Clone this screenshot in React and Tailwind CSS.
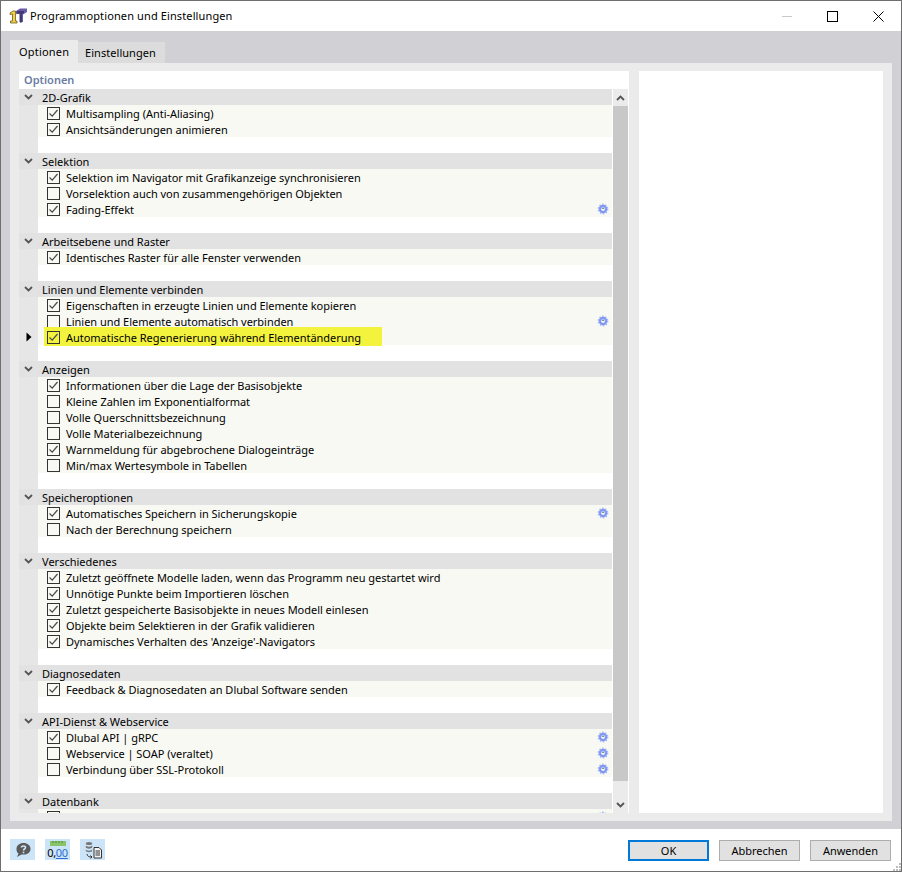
const SECTIONS = [
  { title: "2D-Grafik", rows: [
    { label: "Multisampling (Anti-Aliasing)", on: true },
    { label: "Ansichtsänderungen animieren", on: true },
  ] },
  { title: "Selektion", rows: [
    { label: "Selektion im Navigator mit Grafikanzeige synchronisieren", on: true },
    { label: "Vorselektion auch von zusammengehörigen Objekten" },
    { label: "Fading-Effekt", on: true, gear: true },
  ] },
  { title: "Arbeitsebene und Raster", rows: [
    { label: "Identisches Raster für alle Fenster verwenden", on: true },
  ] },
  { title: "Linien und Elemente verbinden", rows: [
    { label: "Eigenschaften in erzeugte Linien und Elemente kopieren", on: true },
    { label: "Linien und Elemente automatisch verbinden", gear: true },
    { label: "Automatische Regenerierung während Elementänderung", on: true, marked: true },
  ] },
  { title: "Anzeigen", rows: [
    { label: "Informationen über die Lage der Basisobjekte", on: true },
    { label: "Kleine Zahlen im Exponentialformat" },
    { label: "Volle Querschnittsbezeichnung" },
    { label: "Volle Materialbezeichnung" },
    { label: "Warnmeldung für abgebrochene Dialogeinträge", on: true },
    { label: "Min/max Wertesymbole in Tabellen" },
  ] },
  { title: "Speicheroptionen", rows: [
    { label: "Automatisches Speichern in Sicherungskopie", on: true, gear: true },
    { label: "Nach der Berechnung speichern" },
  ] },
  { title: "Verschiedenes", rows: [
    { label: "Zuletzt geöffnete Modelle laden, wenn das Programm neu gestartet wird", on: true },
    { label: "Unnötige Punkte beim Importieren löschen", on: true },
    { label: "Zuletzt gespeicherte Basisobjekte in neues Modell einlesen", on: true },
    { label: "Objekte beim Selektieren in der Grafik validieren", on: true },
    { label: "Dynamisches Verhalten des 'Anzeige'-Navigators", on: true },
  ] },
  { title: "Diagnosedaten", rows: [
    { label: "Feedback & Diagnosedaten an Dlubal Software senden", on: true },
  ] },
  { title: "API-Dienst & Webservice", rows: [
    { label: "Dlubal API | gRPC", on: true, gear: true },
    { label: "Webservice | SOAP (veraltet)", gear: true },
    { label: "Verbindung über SSL-Protokoll", gear: true },
  ] },
  { title: "Datenbank", rows: [{ label: "", gear: true }], last: true },
];

function Chevron({ up }) {
  return (
    <svg width="9" height="6" viewBox="0 0 9 6">
      <path d={up ? "M1 5 L4.5 1.5 L8 5" : "M1 1 L4.5 4.5 L8 1"} fill="none" stroke="#555" strokeWidth="1.8" />
    </svg>
  );
}

function Gear() {
  return (
    <svg width="12" height="12" viewBox="0 0 12 12" className="absolute right-[3px] top-[2px]">
      <circle cx="6" cy="6" r="4.3" fill="#7f96f3" />
      <circle cx="6" cy="6" r="4.6" fill="none" stroke="#9db0f7" strokeWidth="1.6" strokeDasharray="1.4 1.5" />
      <circle cx="6" cy="6" r="1.9" fill="#f4f5ff" />
      <circle cx="6" cy="5.2" r="0.7" fill="#333" />
    </svg>
  );
}

function Checkbox({ on }) {
  return (
    <span className="w-[13px] h-[13px] border border-[#333] flex items-center justify-center shrink-0">
      {on && (
        <svg width="11" height="11" viewBox="0 0 11 11">
          <path d="M1.5 5.5 L4.2 8.2 L9.5 2" fill="none" stroke="#4a4a4a" strokeWidth="1.2" />
        </svg>
      )}
    </span>
  );
}

function OptionRow({ row }) {
  return (
    <div className="flex h-4">
      <div className="w-[19px] bg-[#e6e6e6] flex items-center justify-center relative">
        {row.marked && (
          <svg width="6" height="10" viewBox="0 0 6 10" className="ml-[1px]">
            <path d="M0.5 0.5 L5.5 5 L0.5 9.5 Z" fill="#000" />
          </svg>
        )}
      </div>
      <div className="flex-1 relative bg-[#f8f9f3] flex items-center pl-[9px]">
        {row.marked && <div className="absolute left-[6px] top-[-2px] w-[338px] h-[19px] bg-[#f3f33e]" />}
        <div className="relative flex items-center gap-[6px]">
          <Checkbox on={row.on} />
          <span className="whitespace-nowrap pt-px tracking-[-0.025px]">{row.label}</span>
        </div>
        {row.gear && <Gear />}
      </div>
    </div>
  );
}

function Section({ section }) {
  return (
    <div>
      <div className="h-4 bg-[#e2e2e2] flex items-center">
        <div className="w-[19px] flex justify-center">
          <Chevron />
        </div>
        <span className="ml-[4px] pt-px">{section.title}</span>
      </div>
      {section.rows.map((row, i) => (
        <OptionRow key={i} row={row} />
      ))}
      {!section.last && (
        <div className="flex h-4">
          <div className="w-[19px] bg-[#e6e6e6]" />
        </div>
      )}
    </div>
  );
}

function Logo() {
  return (
    <svg width="18" height="16" viewBox="0 0 18 16">
      <path d="M7 3 L11 0.5 L18 0.5 L18 4 L14 6.5 L14 14 L11 15 L11 6 L7 6 Z" fill="#6a5aa8" />
      <path d="M8 3 L15 3 L15 5.5 L13 5.5 L13 14 L10.5 14 L10.5 5.5 L8 5.5 Z" fill="#3f3a70" />
      <path d="M1 5 L4 3 L6.5 3 L6.5 13 L8 13 L8 15 L1.5 15 L1.5 13 L3.5 13 L3.5 6 L1 6.5 Z" fill="#f1d24a" stroke="#5a4a10" strokeWidth="0.7" />
    </svg>
  );
}

function IconButton({ children }) {
  return (
    <div className="w-[25px] h-[21px] bg-[#cce4f7] flex items-center justify-center relative">
      {children}
    </div>
  );
}

function Button({ children, primary }) {
  return (
    <button
      className={
        primary
          ? "w-[81px] h-[21px] bg-[#e1e1e1] border-2 border-[#0078d7] flex items-center justify-center"
          : "w-[81px] h-[21px] bg-[#e1e1e1] border border-[#adadad] flex items-center justify-center"
      }
    >
      {children}
    </button>
  );
}

export default function App() {
  return (
    <div
      className="w-[902px] h-[872px] border border-[#6e6e6e] bg-white flex flex-col text-[11px] leading-4 text-[#000] overflow-hidden"
      style={{ fontFamily: '"Noto Sans", "Open Sans", sans-serif' }}
    >
      {/* title bar */}
      <div className="h-[30px] flex items-center pl-[8px] shrink-0">
        <Logo />
        <span className="ml-[3px] tracking-[0.12px]">Programmoptionen und Einstellungen</span>
        <div className="ml-auto flex items-center">
          <div className="w-[10px] h-px bg-[#c8c8c8]" />
          <div className="w-[11px] h-[11px] border border-black ml-[35px]" />
          <svg width="11" height="11" viewBox="0 0 11 11" className="ml-[35px] mr-[17px]">
            <path d="M0.5 0.5 L10.5 10.5 M10.5 0.5 L0.5 10.5" stroke="#000" strokeWidth="1" />
          </svg>
        </div>
      </div>

      {/* gray body */}
      <div className="h-[798px] shrink-0 bg-[#d1d0d5] px-[9px] pt-[9px] pb-[8px] flex flex-col">
        <div className="flex items-end h-[23px] shrink-0">
          <div className="w-[68px] h-[23px] bg-[#ebebeb] flex items-center pl-[9px] tracking-[0.2px]">Optionen</div>
          <div className="w-[87px] h-[21px] bg-[#dcdcdc] flex items-center pl-[7px] tracking-[0.05px]">Einstellungen</div>
        </div>
        <div className="flex-1 bg-[#ebebeb] py-[8px] px-[9px] flex gap-[10px] min-h-0">
          <div className="w-[610px] bg-white flex flex-col min-h-0">
            <div className="h-[18px] shrink-0 pl-[5px] flex items-center font-semibold text-[#6b7ca3]">Optionen</div>
            <div className="flex-1 flex min-h-0">
              <div className="w-[593px] overflow-hidden">
                {SECTIONS.map((s) => (
                  <Section key={s.title} section={s} />
                ))}
              </div>
              <div className="w-[15px] ml-px bg-[#ebebeb] flex flex-col items-center">
                <div className="h-[17px] flex items-center justify-center">
                  <Chevron up />
                </div>
                <div className="w-full h-[675px] bg-[#c8c8c8]" />
                <div className="flex-1 flex items-end justify-center pb-[5px]">
                  <Chevron />
                </div>
              </div>
            </div>
          </div>
          <div className="flex-1 bg-white" />
        </div>
      </div>

      {/* footer */}
      <div className="flex-1 flex items-start pt-[10px] pl-[9px] pr-[10px] relative">
        <div className="flex gap-[10px]">
          <IconButton>
            <svg width="18" height="16" viewBox="0 0 18 16">
              <path d="M9.5 1 C13.5 1 16.5 3.5 16.5 7 C16.5 10.5 13.5 12.5 9.5 12.5 L7.5 12.5 L3 15 L4.5 11.5 C3 10.5 2.5 9 2.5 7 C2.5 3.5 5.5 1 9.5 1 Z" fill="#5a5a5a" />
              <path d="M7.5 5.5 C7.5 3.5 11.5 3.5 11.5 5.5 C11.5 7 9.5 7 9.5 8.5" fill="none" stroke="#cce4f7" strokeWidth="1.6" />
              <rect x="8.7" y="9.6" width="1.6" height="1.6" fill="#cce4f7" />
            </svg>
          </IconButton>
          <IconButton>
            <div className="flex flex-col items-center">
              <svg width="16" height="5" viewBox="0 0 16 5" className="block">
                <rect width="16" height="5" fill="#8ac46a" />
                <path d="M3 0 V2 M6 0 V2 M9 0 V2 M12 0 V2" stroke="#4d8a35" strokeWidth="1" />
              </svg>
              <div className="text-[11px] leading-[13px] tracking-[-0.3px] text-black">
                0,<span className="text-[#2f6fd0] underline">00</span>
              </div>
            </div>
          </IconButton>
          <IconButton>
            <svg width="20" height="18" viewBox="0 0 20 18">
              <ellipse cx="6" cy="2.5" rx="3.2" ry="1.5" fill="#777" />
              <path d="M2.8 4.5 C3.5 6 8.5 6 9.2 4.5 V6.5 C8.5 8 3.5 8 2.8 6.5 Z" fill="#777" />
              <path d="M2.8 8.5 C3.5 10 8.5 10 9.2 8.5 V10 C8.5 11.5 3.5 11.5 2.8 10 Z" fill="#777" />
              <path d="M4 13 C4.5 15.5 6 16 8.5 16 M7.5 14.5 L9 16 L7.5 17.5" fill="none" stroke="#333" strokeWidth="1" />
              <path d="M11 6.5 H16 L18.5 9 V17 H11 Z" fill="#f2f2f2" stroke="#333" strokeWidth="1" />
              <path d="M12.5 10 H17 M12.5 12 H17 M12.5 14 H17" stroke="#333" strokeWidth="1" />
            </svg>
          </IconButton>
        </div>
        <div className="ml-auto flex gap-[10px] mt-px">
          <Button primary>OK</Button>
          <Button>Abbrechen</Button>
          <Button>Anwenden</Button>
        </div>
        <svg width="8" height="8" viewBox="0 0 8 8" className="absolute right-0 bottom-0">
          <path d="M6 0 H8 V2 H6 Z M3 3 H5 V5 H3 Z M6 3 H8 V5 H6 Z M0 6 H2 V8 H0 Z M3 6 H5 V8 H3 Z M6 6 H8 V8 H6 Z" fill="#bdbdbd" />
        </svg>
      </div>
    </div>
  );
}
